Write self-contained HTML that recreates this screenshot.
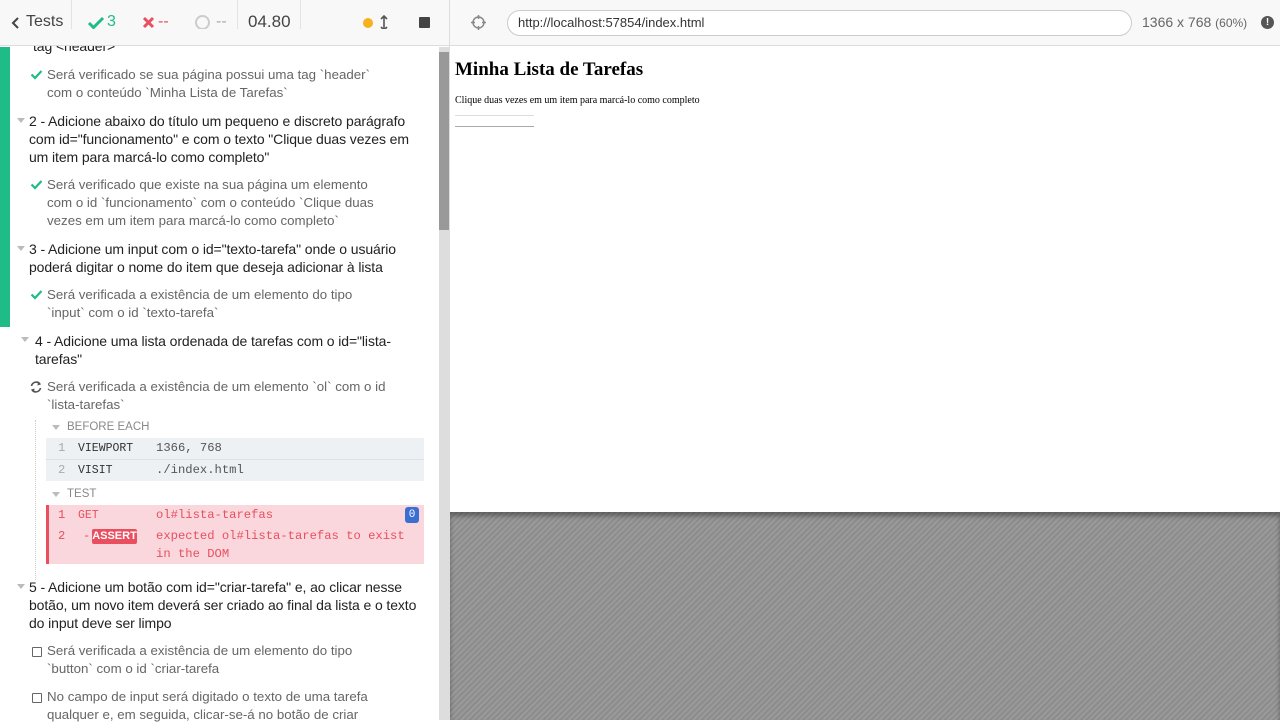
<!DOCTYPE html>
<html><head><meta charset="utf-8"><style>
*{margin:0;padding:0;box-sizing:border-box}
body{width:1280px;height:720px;overflow:hidden;position:relative;font-family:"Liberation Sans",sans-serif;background:#fff}
.a{position:absolute;white-space:nowrap}
.t{font-size:14px;color:#222;line-height:18px;letter-spacing:-0.1px}
.s{font-size:13.3px;color:#666;line-height:18px}
.m{font-family:"Liberation Mono",monospace;font-size:12.2px;line-height:18px}
.tri{position:absolute;width:0;height:0;border-left:4px solid transparent;border-right:4px solid transparent;border-top:5px solid #bbb}
.ck{position:absolute}
.box{position:absolute;width:10px;height:10px;border:1px solid #666;border-radius:1px}
</style></head><body>
<div class="a" style="left:0;top:0;width:450px;height:46px;background:#f8f8f8;border-bottom:1px solid #ddd"></div>
<div class="a" style="left:71px;top:0;width:1px;height:46px;background:#e3e3e3"></div>
<div class="a" style="left:237px;top:0;width:1px;height:46px;background:#e3e3e3"></div>
<div class="a" style="left:300px;top:0;width:1px;height:46px;background:#e3e3e3"></div>
<div class="a" style="left:449px;top:0;width:1px;height:720px;background:#ddd"></div>
<svg class="a" style="left:11px;top:16px" width="10" height="14"><path d="M7 2 L2 7 L7 12" stroke="#444" stroke-width="2" fill="none"/></svg>
<div class="a" style="left:26px;top:13px;font-size:16px;color:#444">Tests</div>
<svg class="a" style="left:87px;top:15px" width="18" height="15"><path d="M2 8 L6.5 12.5 L16 3" stroke="#1fbc87" stroke-width="3" fill="none"/></svg>
<div class="a" style="left:107px;top:13px;font-size:16px;color:#1fbc87">3</div>
<svg class="a" style="left:142px;top:16px" width="13" height="13"><path d="M2 2 L11 11 M11 2 L2 11" stroke="#e94f5f" stroke-width="3"/></svg>
<div class="a" style="left:158px;top:13px;font-size:16px;color:#e94f5f">--</div>
<div class="a" style="left:195px;top:15px;width:15px;height:15px;border:2px solid #ccc;border-radius:50%"></div>
<div class="a" style="left:216px;top:13px;font-size:16px;color:#aaa">--</div>
<div class="a" style="left:248px;top:12px;font-size:17px;color:#444">04.80</div>
<div class="a" style="left:363px;top:18px;width:10px;height:10px;border-radius:50%;background:#f6b21d"></div>
<svg class="a" style="left:380px;top:15px" width="8" height="16"><path d="M4 1 V15 M1 4 L4 1 L7 4 M1 12 L4 15 L7 12" stroke="#555" stroke-width="1.6" fill="none"/></svg>
<div class="a" style="left:419px;top:17px;width:11px;height:11px;background:#444;border-radius:1px"></div>
<div class="a" style="left:439px;top:47px;width:10px;height:673px;background:#ddd"></div>
<div class="a" style="left:439px;top:52px;width:10px;height:178px;background:#999"></div>
<div class="a" style="left:0;top:47px;width:10px;height:280px;background:#1fbc87"></div>
<div class="a t" style="left:33px;top:37px">tag &lt;header&gt;</div>
<div class="a" style="left:0;top:29px;width:438px;height:17px;background:#f8f8f8;border-bottom:1px solid #ddd"></div>
<svg class="ck" style="left:30px;top:69px" width="13" height="11"><path d="M1.5 5.5 L5 9 L11.5 2" stroke="#1fbc87" stroke-width="2.2" fill="none"/></svg>
<div class="a s" style="left:47px;top:66px">Será verificado se sua página possui uma tag `header`<br>com o conteúdo `Minha Lista de Tarefas`</div>
<div class="tri" style="left:17px;top:118px"></div>
<div class="a t" style="left:29px;top:112px">2 - Adicione abaixo do título um pequeno e discreto parágrafo<br>com id="funcionamento" e com o texto "Clique duas vezes em<br>um item para marcá-lo como completo"</div>
<svg class="ck" style="left:30px;top:179px" width="13" height="11"><path d="M1.5 5.5 L5 9 L11.5 2" stroke="#1fbc87" stroke-width="2.2" fill="none"/></svg>
<div class="a s" style="left:47px;top:176px">Será verificado que existe na sua página um elemento<br>com o id `funcionamento` com o conteúdo `Clique duas<br>vezes em um item para marcá-lo como completo`</div>
<div class="tri" style="left:17px;top:246px"></div>
<div class="a t" style="left:29px;top:240px">3 - Adicione um input com o id="texto-tarefa" onde o usuário<br>poderá digitar o nome do item que deseja adicionar à lista</div>
<svg class="ck" style="left:30px;top:289px" width="13" height="11"><path d="M1.5 5.5 L5 9 L11.5 2" stroke="#1fbc87" stroke-width="2.2" fill="none"/></svg>
<div class="a s" style="left:47px;top:286px">Será verificada a existência de um elemento do tipo<br>`input` com o id `texto-tarefa`</div>
<div class="tri" style="left:21px;top:337px"></div>
<div class="a t" style="left:35px;top:332px">4 - Adicione uma lista ordenada de tarefas com o id="lista-<br>tarefas"</div>
<svg class="a" style="left:29px;top:380px" width="14" height="14"><path d="M2.5 6 A4.8 4.8 0 0 1 11 4 M11.5 8 A4.8 4.8 0 0 1 3 10" stroke="#555" stroke-width="1.6" fill="none"/><path d="M9 1.5 L12 4.5 L8.5 5.5Z M5 12.5 L2 9.5 L5.5 8.5Z" fill="#555"/></svg>
<div class="a s" style="left:47px;top:378px">Será verificada a existência de um elemento `ol` com o id<br>`lista-tarefas`</div>
<div class="a" style="left:35px;top:420px;height:160px;border-left:1px dotted #ccc"></div>
<div class="tri" style="left:52px;top:425px"></div>
<div class="a" style="left:67px;top:421px;font-size:11.5px;color:#888">BEFORE EACH</div>
<div class="a" style="left:46px;top:438px;width:378px;height:43px;background:#eef1f4"></div>
<div class="a" style="left:46px;top:459px;width:378px;height:1px;background:#dde1e5"></div>
<div class="a m" style="left:58px;top:439px;color:#aaa">1</div>
<div class="a m" style="left:78px;top:440px;color:#333;font-size:11.5px">VIEWPORT</div>
<div class="a m" style="left:156px;top:439px;color:#555">1366, 768</div>
<div class="a m" style="left:58px;top:461px;color:#aaa">2</div>
<div class="a m" style="left:78px;top:462px;color:#333;font-size:11.5px">VISIT</div>
<div class="a m" style="left:156px;top:461px;color:#555">./index.html</div>
<div class="tri" style="left:52px;top:492px"></div>
<div class="a" style="left:67px;top:488px;font-size:11.5px;color:#888">TEST</div>
<div class="a" style="left:46px;top:505px;width:378px;height:59px;background:#f9d7dc;border-left:3px solid #e94f5f"></div>
<div class="a m" style="left:58px;top:506px;color:#e94f5f">1</div>
<div class="a m" style="left:78px;top:507px;color:#e94f5f;font-size:11.5px">GET</div>
<div class="a m" style="left:156px;top:506px;color:#e94f5f">ol#lista-tarefas</div>
<div class="a" style="left:405px;top:507px;width:14px;height:16px;background:#3a6fd1;border-radius:3px;color:#fff;font-family:'Liberation Mono',monospace;font-size:11px;text-align:center;line-height:16px">0</div>
<div class="a m" style="left:58px;top:527px;color:#e94f5f">2</div>
<div class="a m" style="left:83px;top:527px;color:#e94f5f">-</div>
<div class="a" style="left:92px;top:529px;width:45px;height:15px;background:#e94f5f;color:#fff;font-size:11px;font-weight:bold;line-height:15px;text-align:center;border-radius:2px">ASSERT</div>
<div class="a m" style="left:156px;top:527px;color:#e94f5f">expected ol#lista-tarefas to exist<br>in the DOM</div>
<div class="tri" style="left:17px;top:584px"></div>
<div class="a t" style="left:29px;top:578px">5 - Adicione um botão com id="criar-tarefa" e, ao clicar nesse<br>botão, um novo item deverá ser criado ao final da lista e o texto<br>do input deve ser limpo</div>
<div class="box" style="left:32px;top:647px"></div>
<div class="a s" style="left:47px;top:642px">Será verificada a existência de um elemento do tipo<br>`button` com o id `criar-tarefa</div>
<div class="box" style="left:32px;top:693px"></div>
<div class="a s" style="left:47px;top:688px">No campo de input será digitado o texto de uma tarefa<br>qualquer e, em seguida, clicar-se-á no botão de criar</div>
<div class="a" style="left:450px;top:0;width:830px;height:46px;background:#f8f8f8;border-bottom:1px solid #ddd"></div>
<svg class="a" style="left:470px;top:14px" width="17" height="17"><circle cx="8.5" cy="8.5" r="5.5" stroke="#888" stroke-width="1.5" fill="none"/><path d="M8.5 1 V5 M8.5 12 V16 M1 8.5 H5 M12 8.5 H16" stroke="#888" stroke-width="1.5"/></svg>
<div class="a" style="left:507px;top:10px;width:625px;height:26px;border:1px solid #ccc;border-radius:13px;background:#fff"></div>
<div class="a" style="left:518px;top:15px;font-size:13px;color:#333">http://localhost:57854/index.html</div>
<div class="a" style="left:1142px;top:14px;font-size:14px;color:#666">1366 x 768 <span style="font-size:12px">(60%)</span></div>
<div class="a" style="left:1261px;top:16px;width:13px;height:13px;border-radius:50%;background:#555;color:#fff;font-size:10px;font-weight:bold;text-align:center;line-height:13px">!</div>
<div class="a" style="left:450px;top:47px;width:830px;height:465px;background:#fff"></div>
<div class="a" style="left:455px;top:59px;font-family:'Liberation Serif',serif;font-size:19px;font-weight:bold;color:#000">Minha Lista de Tarefas</div>
<div class="a" style="left:455px;top:95px;font-family:'Liberation Serif',serif;font-size:10px;color:#000">Clique duas vezes em um item para marcá-lo como completo</div>
<div class="a" style="left:455px;top:115px;width:79px;height:1px;background:#ddd"></div>
<div class="a" style="left:455px;top:126px;width:79px;height:1px;background:#aaa"></div>
<div class="a" style="left:450px;top:512px;width:830px;height:208px;background:repeating-linear-gradient(-45deg,#8c8c8c 0 2px,#9a9a9a 2px 4px);box-shadow:inset 0 4px 5px rgba(0,0,0,.35)"></div>
</body></html>
